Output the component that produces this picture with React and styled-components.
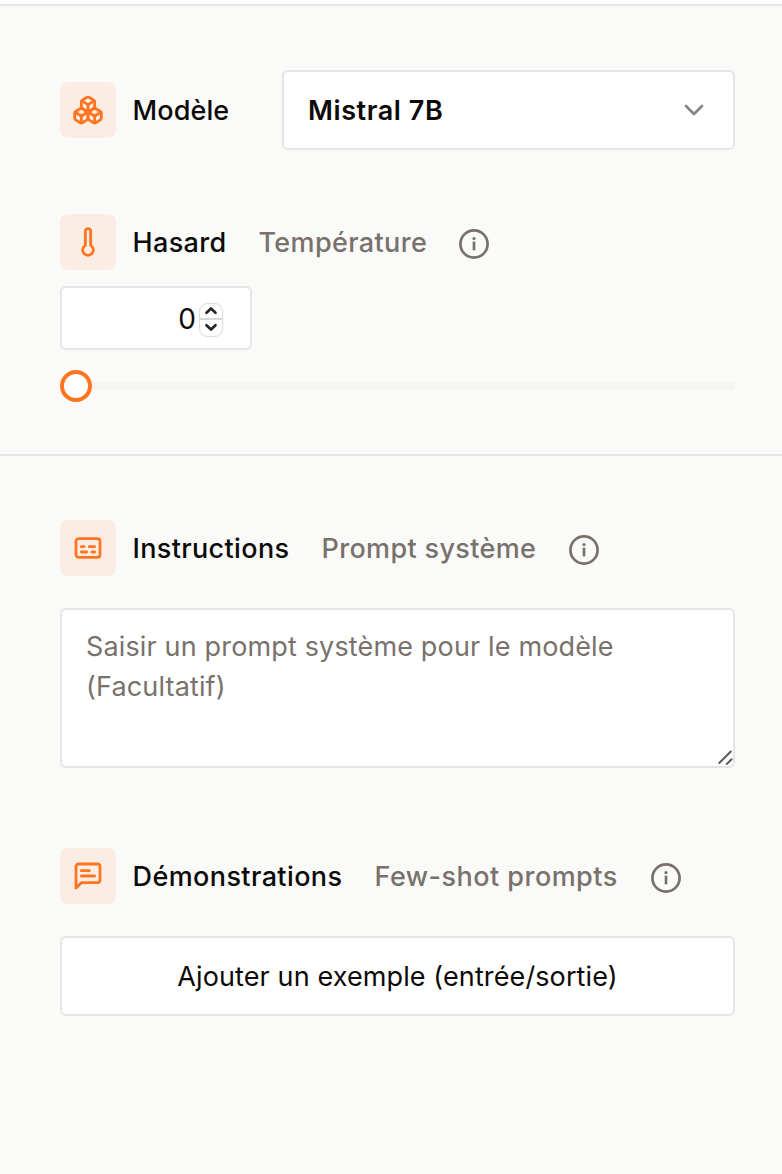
import React from "react";
import styled, { createGlobalStyle } from "styled-components";
import { Boxes, Captions, ChevronDown, Thermometer } from "lucide-react";

const Global = createGlobalStyle`
  *, *::before, *::after { box-sizing: border-box; }
  body {
    margin: 0;
    background: #fafaf9;
    color: #0c0a09;
    font-family: Inter, "Liberation Sans", sans-serif;
    font-size: 27px;
    line-height: 40px;
  }
`;

const Panel = styled.main`
  min-height: 1174px;
  padding-top: 4px;
  background: linear-gradient(#fff 4px, #fafaf9 4px);
`;

const Section = styled.section`
  display: flex;
  flex-direction: column;
  padding: 64px 47px 0 60px;
  border-top: 2px solid #e5e5e5;
  height: ${(p) => p.$height || "auto"};
`;

const Header = styled.header`
  display: flex;
  align-items: center;
  height: ${(p) => p.$height || "56px"};
  margin-top: ${(p) => p.$top || 0};
`;

const IconTile = styled.span`
  display: grid;
  place-items: center;
  width: 56px;
  height: 56px;
  margin-right: 16px;
  border-radius: 8px;
  background: #fbede4;
  color: #ff7420;
`;

const Label = styled.span`
  width: ${(p) => p.$width};
  padding: 1px 0 0 0.5px;
  font-weight: 500;
  letter-spacing: ${(p) => p.$track || "0.35px"};
  color: ${(p) => (p.$muted ? "#78716c" : "#0c0a09")};
  white-space: nowrap;
`;

const InfoMark = styled.svg`
  width: 32px;
  height: 32px;
  margin-top: 4px;
  color: #78716c;
`;

const Select = styled.button`
  display: flex;
  flex: 1;
  align-items: center;
  justify-content: space-between;
  height: 80px;
  padding: 0 23px 0 24px;
  border: 2px solid #e5e5e5;
  border-radius: 6px;
  background: #fff;
  color: #0c0a09;
  font: 600 27px/40px Inter, "Liberation Sans", sans-serif;
  letter-spacing: 0.58px;
  span { padding-top: 1px; }
  svg { color: #858585; }
`;

const NumberField = styled.div`
  display: flex;
  align-items: center;
  justify-content: flex-end;
  gap: 3px;
  width: 192px;
  height: 64px;
  margin-top: 16px;
  padding-right: 27px;
  border: 2px solid #e5e5e5;
  border-radius: 6px;
  background: #fff;
  font-size: 28px;
  > span:first-child { padding-top: 1px; }
`;

const Stepper = styled.span`
  display: grid;
  grid-template-rows: 1fr 1fr;
  width: 24px;
  height: 34px;
  margin-top: 3px;
  border: 1px solid #dedede;
  border-radius: 9px;
  box-shadow: 0 0 1px #ccc;
`;

const Step = styled.span`
  display: grid;
  place-items: center;
  &:first-child { border-bottom: 2px solid #d9d9d9; }
`;

const Slider = styled.div`
  display: flex;
  align-items: center;
  height: 32px;
  margin-top: 20px;
`;

const Thumb = styled.span`
  width: 32px;
  height: 32px;
  border: 4px solid #ff7420;
  border-radius: 50%;
  background: #fff;
`;

const Track = styled.span`
  flex: 1;
  height: 8px;
  border-radius: 0 4px 4px 0;
  background: #f5f5f4;
`;

const PromptArea = styled.div`
  display: flex;
  align-items: flex-end;
  justify-content: space-between;
  height: 160px;
  margin-top: 32px;
  border: 2px solid #e5e5e5;
  border-radius: 6px;
  background: #fff;
`;

const Placeholder = styled.p`
  align-self: flex-start;
  margin: 0;
  padding: 17px 0 0 24px;
  color: #78716c;
  letter-spacing: 0.15px;
  white-space: nowrap;
`;

const AddButton = styled.button`
  height: 80px;
  margin-top: 32px;
  padding: 2px 0 0;
  border: 2px solid #e5e5e5;
  border-radius: 6px;
  background: #fff;
  color: #0c0a09;
  font: 400 27px/40px Inter, "Liberation Sans", sans-serif;
  letter-spacing: 0.11px;
`;

const Info = () => (
  <InfoMark viewBox="0 0 32 32" fill="none" stroke="currentColor" strokeLinecap="round" strokeLinejoin="round">
    <circle cx="16" cy="16" r="13.6" strokeWidth="2.7" />
    <path d="M16 15v6" strokeWidth="2.7" strokeLinecap="square" />
    <circle cx="16" cy="10.6" r="1.6" fill="currentColor" stroke="none" />
  </InfoMark>
);

const MessageText = () => (
  <svg width="32" height="32" viewBox="0 0 24 24" fill="none" stroke="currentColor" strokeWidth="2.1" strokeLinecap="round" strokeLinejoin="round">
    <path d="M21 15a2 2 0 0 1-2 2H7l-4 4V5a2 2 0 0 1 2-2h14a2 2 0 0 1 2 2z" />
    <path d="M13 8H7" />
    <path d="M17 12H7" />
  </svg>
);

const Arrow = ({ down }) => (
  <svg width="14" height="9" viewBox="0 0 14 9" fill="none" stroke="#262626" strokeWidth="2.7" strokeLinecap="round" strokeLinejoin="round">
    <path d={down ? "M2.5 2.2 7 6.5 11.5 2.2" : "M2.5 6.8 7 2.5 11.5 6.8"} />
  </svg>
);

export default function App() {
  return (
    <>
      <Global />
      <Panel>
        <Section $height="450px">
          <Header $height="80px">
            <IconTile><Boxes size={32} strokeWidth={2.1} /></IconTile>
            <Label $width="150px" $track="0.1px">Modèle</Label>
            <Select>
              <span>Mistral 7B</span>
              <ChevronDown size={32} />
            </Select>
          </Header>
          <Header $top="64px">
            <IconTile><Thermometer size={32} strokeWidth={2.1} /></IconTile>
            <Label $width="126px">Hasard</Label>
            <Label $muted $width="200px">Température</Label>
            <Info />
          </Header>
          <NumberField>
            <span>0</span>
            <Stepper>
              <Step><Arrow /></Step>
              <Step><Arrow down /></Step>
            </Stepper>
          </NumberField>
          <Slider>
            <Thumb />
            <Track />
          </Slider>
        </Section>
        <Section>
          <Header>
            <IconTile><Captions size={32} strokeWidth={2.1} /></IconTile>
            <Label $width="189px">Instructions</Label>
            <Label $muted $width="247px">Prompt système</Label>
            <Info />
          </Header>
          <PromptArea>
            <Placeholder>
              Saisir un prompt système pour le modèle
              <br />
              (Facultatif)
            </Placeholder>
            <svg width="18" height="18" viewBox="0 0 18 18" stroke="#5c5c5c" strokeWidth="2" strokeLinecap="round">
              <path d="M4.3 15 15.8 3.5M11.8 16 16.6 11.2" />
            </svg>
          </PromptArea>
          <Header $top="80px">
            <IconTile><MessageText /></IconTile>
            <Label $width="242px" $track="0.4px">Démonstrations</Label>
            <Label $muted $width="276px" $track="0.46px">Few-shot prompts</Label>
            <Info />
          </Header>
          <AddButton>Ajouter un exemple (entrée/sortie)</AddButton>
        </Section>
      </Panel>
    </>
  );
}
